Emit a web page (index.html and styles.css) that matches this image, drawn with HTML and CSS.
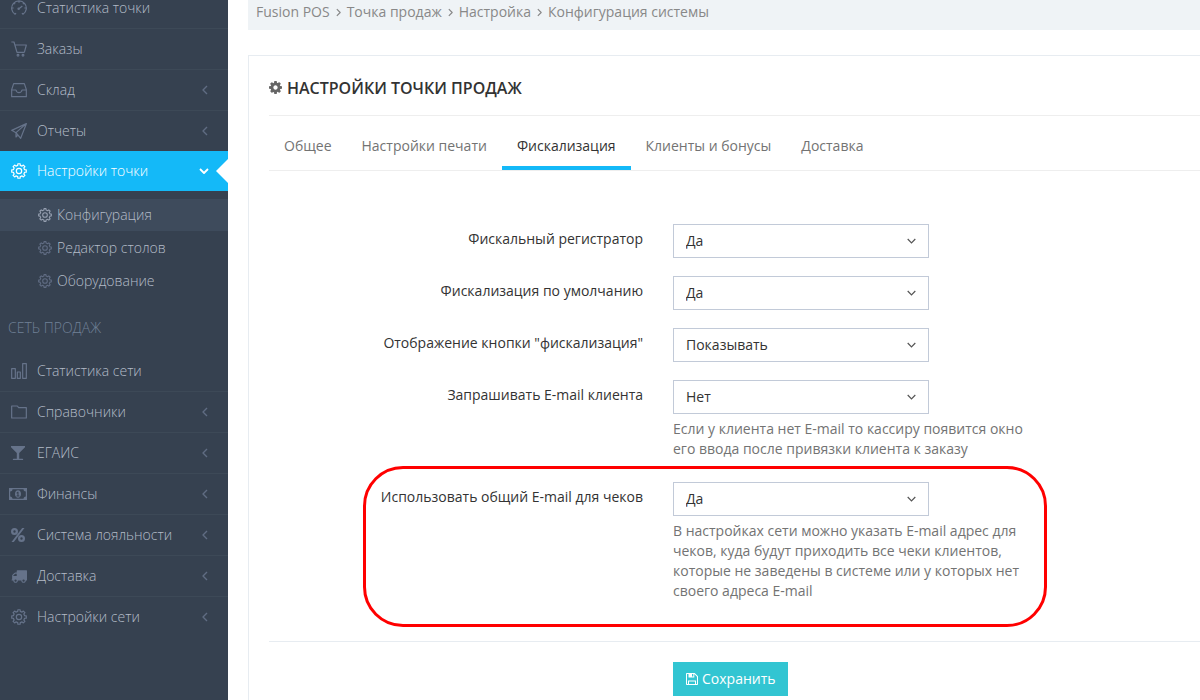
FILE: index.html
```
<!DOCTYPE html>
<html lang="ru">
  <head>
    <meta charset="UTF-8" />
    <meta name="viewport" content="width=device-width, initial-scale=1.0" />
    <title>Fusion POS - Конфигурация системы</title>
    <link rel="stylesheet" href="styles.css">
  </head>
  <body>
    <!-- Иконки -->
    <svg class="sprite" aria-hidden="true">
      <symbol id="i-gear" viewBox="0 0 24 24">
        <path class="line" d="M10.3 1.1H13.7L13.9 3.6L16.6 4.7L18.5 3.1L20.9 5.5L19.3 7.4L20.4 10.1L22.9 10.3V13.7L20.4 13.9L19.3 16.6L20.9 18.5L18.5 20.9L16.6 19.3L13.9 20.4L13.7 22.9H10.3L10.1 20.4L7.4 19.3L5.5 20.9L3.1 18.5L4.7 16.6L3.6 13.9L1.1 13.7V10.3L3.6 10.1L4.7 7.4L3.1 5.5L5.5 3.1L7.4 4.7L10.1 3.6Z" />
        <circle class="line" cx="12" cy="12" r="4" />
      </symbol>
      <symbol id="i-speed" viewBox="0 0 24 24">
        <path class="line" d="M6 21.5A11 11 0 1 1 18 21.5M12 13l5-4M12 1v3M1 12h3M20 12h3M4.2 4.2l2 2M19.8 4.2l-2 2M6 21.5l1.5-2M18 21.5l-1.5-2" />
        <circle class="line" cx="11.5" cy="13" r="1" />
      </symbol>
      <symbol id="i-cart" viewBox="0 0 24 24">
        <path class="line" d="M.5 1.5h4L9 17h11M5.500 6H23l-3 11" />
        <circle class="line" cx="10.5" cy="21.5" r="1.3" />
        <circle class="line" cx="18" cy="21.5" r="1.3" />
      </symbol>
      <symbol id="i-drawer" viewBox="0 0 24 24">
        <path class="line" d="M4 2.500h16l3 9V22H1V11.500zM1 12h6.500c.5 2.500 2 4 4.500 4s4-1.500 4.500-4H23" />
      </symbol>
      <symbol id="i-plane" viewBox="0 0 24 24">
        <path class="line" d="M23 1L1 11l6.500 3.500L14.500 23zM23 1L7.500 14.500V21l3.300-3.300" />
      </symbol>
      <symbol id="i-chart" viewBox="0 0 24 24">
        <path class="line" d="M1 8.500h5.500V23H1zM9.500 13.500H14V23H9.500zM17.500 1H23v22h-5.500z" />
      </symbol>
      <symbol id="i-folder" viewBox="0 0 24 24">
        <path class="line" d="M1 3h8.500l2 2.500H23V21H1z" />
      </symbol>
      <symbol id="i-glass" viewBox="1 1 14 14">
        <path d="M1 1h14c.5.300.400.800 0 1.200L9.200 8v5.800h3.300c.9 0 .9 1.200 0 1.200h-9c-.9 0-.9-1.200 0-1.200h3.300V8L1 2.200C.6 1.800.5 1.300 1 1z" />
      </symbol>
      <symbol id="i-money" viewBox="0 0 18 12">
        <path fill-rule="evenodd" d="M0 0h18v12H0zM3.500 1.200c0 1.300-1 2.300-2.300 2.300v5c1.300 0 2.300 1 2.300 2.300h11c0-1.300 1-2.300 2.300-2.300v-5c-1.300 0-2.300-1-2.300-2.300zM9 2.300c1.900 0 3 1.700 3 3.700s-1.100 3.700-3 3.700S6 8 6 6s1.100-3.700 3-3.700zm-.4 1.500L7.300 4.900l.5.700.6-.4v2.300h-.9v.9h2.900v-.9h-.9V3.800z" />
      </symbol>
      <symbol id="i-percent" viewBox="1 1 14 14">
        <path fill-rule="evenodd" d="M4.500 1a3.500 3.500 0 1 1 0 7 3.500 3.500 0 0 1 0-7zm0 2.300a1.200 1.200 0 1 0 0 2.400 1.200 1.200 0 0 0 0-2.400zM11.500 8a3.500 3.500 0 1 1 0 7 3.500 3.500 0 0 1 0-7zm0 2.300a1.200 1.200 0 1 0 0 2.400 1.200 1.200 0 0 0 0-2.400zM12.200 1h2.300L3.800 15H1.500z" />
      </symbol>
      <symbol id="i-truck" viewBox="0 128 1792 1536">
        <path d="M640 1408q0-52-38-90t-90-38-90 38-38 90 38 90 90 38 90-38 38-90zm-384-512h384v-256h-158q-13 0-22 9l-195 195q-9 9-9 22v30zm1280 512q0-52-38-90t-90-38-90 38-38 90 38 90 90 38 90-38 38-90zm256-1088v1024q0 15-4 26.500t-13.500 18.500-16.500 11.500-23.500 6-22.500 2-25.500 0-22.500-.5q0 106-75 181t-181 75-181-75-75-181h-384q0 106-75 181t-181 75-181-75-75-181h-64q-3 0-22.500.5t-25.500 0-22.500-2-23.500-6-16.500-11.500-13.500-18.500-4-26.500q0-26 19-45t45-19v-320q0-8-.5-35t0-38 2.500-34.500 6.500-37 14-30.500 22.500-30l198-198q19-19 50.500-32t58.500-13h160v-192q0-26 19-45t45-19h1024q26 0 45 19t19 45z" />
      </symbol>
      <symbol id="i-cog" viewBox="128 128 1536 1536">
        <path d="M1152 896q0-106-75-181t-181-75-181 75-75 181 75 181 181 75 181-75 75-181zm512-109v222q0 12-8 23t-20 13l-185 28q-19 54-39 91 35 50 107 138 10 12 10 25t-9 23q-27 37-99 108t-94 71q-12 0-26-9l-138-108q-44 23-91 38-16 136-29 186-7 28-36 28h-222q-14 0-24.500-8.500t-11.500-21.500l-28-184q-49-16-90-37l-141 107q-10 9-25 9-14 0-25-11-126-114-165-168-7-10-7-23 0-12 8-23 15-21 51-66.500t54-70.500q-27-50-41-99l-183-27q-13-2-21-12.500t-8-23.500v-222q0-12 8-23t19-13l186-28q14-46 39-92-40-57-107-138-10-12-10-24 0-10 9-23 26-36 98.500-107.500t94.500-71.500q13 0 26 10l138 107q44-23 91-38 16-136 29-186 7-28 36-28h222q14 0 24.500 8.500t11.500 21.500l28 184q49 16 90 37l142-107q9-9 24-9 13 0 25 10 129 119 165 170 7 8 7 22 0 12-8 23-15 21-51 66.500t-54 70.500q26 50 41 98l183 28q13 2 21 12.500t8 23.500z" />
      </symbol>
      <symbol id="i-save" viewBox="0 0 12 12">
        <path fill-rule="evenodd" d="M0 .8Q0 0 .8 0H8.700l3.300 3.300v7.900q0 .8-.8.800H.8Q0 12 0 11.200zM1 1v10h1V7.500h8V11h1V3.800L8.300 1v3.500H2.500V1zM6 1v2.500h1.300V1zM3 8.500V11h6V8.500z" />
      </symbol>
      <symbol id="i-left" viewBox="0 0 6 10">
        <path class="line thin" d="M5 1L1 5l4 4" />
      </symbol>
      <symbol id="i-right" viewBox="0 0 6 10">
        <path class="line thin" d="M1 1l4 4-4 4" />
      </symbol>
      <symbol id="i-down" viewBox="0 0 10 6">
        <path class="line" d="M1 1l4 4 4-4" />
      </symbol>
    </svg>

    <div class="page">
      <!-- Боковое меню -->
      <nav class="sidebar">
        <ul class="menu">
          <li><a class="menu-link" href="#"><svg class="icon"><use href="#i-speed" /></svg><span class="title">Статистика точки</span></a></li>
          <li><a class="menu-link" href="#"><svg class="icon"><use href="#i-cart" /></svg><span class="title">Заказы</span></a></li>
          <li><a class="menu-link" href="#"><svg class="icon"><use href="#i-drawer" /></svg><span class="title">Склад</span><svg class="arrow"><use href="#i-left" /></svg></a></li>
          <li><a class="menu-link" href="#"><svg class="icon"><use href="#i-plane" /></svg><span class="title">Отчеты</span><svg class="arrow"><use href="#i-left" /></svg></a></li>
          <li>
            <a class="menu-link active" href="#"><svg class="icon"><use href="#i-gear" /></svg><span class="title">Настройки точки</span><svg class="arrow"><use href="#i-down" /></svg></a>
            <ul class="sub-menu">
              <li><a class="sub-link active" href="#"><svg class="icon"><use href="#i-gear" /></svg>Конфигурация</a></li>
              <li><a class="sub-link" href="#"><svg class="icon"><use href="#i-gear" /></svg>Редактор столов</a></li>
              <li><a class="sub-link" href="#"><svg class="icon"><use href="#i-gear" /></svg>Оборудование</a></li>
            </ul>
          </li>
        </ul>
        <h3 class="menu-heading">СЕТЬ ПРОДАЖ</h3>
        <ul class="menu network">
          <li><a class="menu-link" href="#"><svg class="icon"><use href="#i-chart" /></svg><span class="title">Статистика сети</span></a></li>
          <li><a class="menu-link" href="#"><svg class="icon"><use href="#i-folder" /></svg><span class="title">Справочники</span><svg class="arrow"><use href="#i-left" /></svg></a></li>
          <li><a class="menu-link" href="#"><svg class="icon solid"><use href="#i-glass" /></svg><span class="title">ЕГАИС</span><svg class="arrow"><use href="#i-left" /></svg></a></li>
          <li><a class="menu-link" href="#"><svg class="icon wide"><use href="#i-money" /></svg><span class="title">Финансы</span><svg class="arrow"><use href="#i-left" /></svg></a></li>
          <li><a class="menu-link" href="#"><svg class="icon solid"><use href="#i-percent" /></svg><span class="title">Система лояльности</span><svg class="arrow"><use href="#i-left" /></svg></a></li>
          <li><a class="menu-link" href="#"><svg class="icon"><use href="#i-truck" /></svg><span class="title">Доставка</span><svg class="arrow"><use href="#i-left" /></svg></a></li>
          <li><a class="menu-link" href="#"><svg class="icon"><use href="#i-gear" /></svg><span class="title">Настройки сети</span><svg class="arrow"><use href="#i-left" /></svg></a></li>
        </ul>
      </nav>

      <main class="content">
        <div class="breadcrumb">
          <a href="#">Fusion POS</a>
          <svg class="sep"><use href="#i-right" /></svg>
          <a href="#">Точка продаж</a>
          <svg class="sep"><use href="#i-right" /></svg>
          <a href="#">Настройка</a>
          <svg class="sep"><use href="#i-right" /></svg>
          <span>Конфигурация системы</span>
        </div>

        <section class="portlet">
          <header class="portlet-title">
            <svg class="cog"><use href="#i-cog" /></svg>
            <h1>НАСТРОЙКИ ТОЧКИ ПРОДАЖ</h1>
          </header>

          <nav class="tabs">
            <a class="tab" href="#">Общее</a>
            <a class="tab" href="#">Настройки печати</a>
            <a class="tab active" href="#">Фискализация</a>
            <a class="tab" href="#">Клиенты и бонусы</a>
            <a class="tab" href="#">Доставка</a>
          </nav>

          <form>
            <div class="form-body">
              <div class="form-group">
                <label for="registrar">Фискальный регистратор</label>
                <div class="control">
                  <select id="registrar"><option>Да</option><option>Нет</option></select>
                </div>
              </div>
              <div class="form-group">
                <label for="byDefault">Фискализация по умолчанию</label>
                <div class="control">
                  <select id="byDefault"><option>Да</option><option>Нет</option></select>
                </div>
              </div>
              <div class="form-group">
                <label for="showButton">Отображение кнопки "фискализация"</label>
                <div class="control">
                  <select id="showButton"><option>Показывать</option><option>Скрывать</option></select>
                </div>
              </div>
              <div class="form-group">
                <label for="askEmail">Запрашивать E-mail клиента</label>
                <div class="control">
                  <select id="askEmail"><option>Нет</option><option>Да</option></select>
                  <p class="help">Если у клиента нет E-mail то кассиру появится окно его ввода после привязки клиента к заказу</p>
                </div>
              </div>
              <div class="form-group highlight">
                <label for="commonEmail">Использовать общий E-mail для чеков</label>
                <div class="control">
                  <select id="commonEmail"><option>Да</option><option>Нет</option></select>
                  <p class="help">В настройках сети можно указать E-mail адрес для чеков, куда будут приходить все чеки клиентов, которые не заведены в системе или у которых нет своего адреса E-mail</p>
                </div>
              </div>
            </div>
            <div class="form-actions">
              <button class="save" type="submit"><svg><use href="#i-save" /></svg>Сохранить</button>
            </div>
          </form>
        </section>
      </main>
    </div>
  </body>
</html>
```
FILE: styles.css
```
*,
*::after {
  box-sizing: border-box;
}

body {
  margin: 0;
  font-family: "Open Sans", "Noto Sans", sans-serif;
  font-size: 14px;
  line-height: 20px;
  color: #333;
  background-color: #fff;
}

a {
  color: inherit;
  text-decoration: none;
}

ul {
  list-style: none;
  margin: 0;
  padding: 0;
}

svg {
  display: block;
  flex: none;
  fill: currentColor;
}

.sprite {
  display: none;
}

.line {
  fill: none;
  stroke: currentColor;
  stroke-width: 1.8;
  stroke-linejoin: round;
}

.line.thin {
  stroke-width: 1.4;
}

.page {
  display: flex;
  height: 100vh;
  overflow: hidden;
}

/* sidebar */
.sidebar {
  flex: 0 0 228px;
  margin-top: -13px;
  background-color: #364150;
  color: #b4bcc8;
  font-weight: 300;
}

.menu-link {
  display: flex;
  align-items: center;
  height: 41px;
  padding: 0 20px 0 11px;
  border-top: 1px solid #3d4957;
}

.network li:first-child .menu-link {
  border-top-color: transparent;
}

.menu-link .icon {
  width: 16px;
  height: 16px;
  margin-right: 10px;
  color: #66738a;
}

.menu-link .icon.solid {
  width: 14px;
  height: 14px;
  margin-right: 12px;
}

.menu-link .icon.wide {
  width: 18px;
  height: 12px;
  margin-left: -2px;
}

.title {
  flex: 1;
  line-height: 16px;
}

.arrow {
  width: 6px;
  height: 10px;
  color: #606c83;
}

.menu-link.active {
  position: relative;
  height: 40px;
  border-top: none;
  background-color: #14b9f8;
  color: #fff;
  padding-right: 19px;
}

.menu-link.active .icon,
.menu-link.active .arrow {
  color: #fff;
}

.menu-link.active .arrow {
  width: 10px;
  height: 6px;
}

.menu-link.active::after {
  content: "";
  position: absolute;
  top: 8px;
  right: 0;
  border: 12px solid transparent;
  border-left: none;
  border-right-color: #fff;
}

.sub-menu {
  padding: 8px 0;
}

.sub-link {
  display: flex;
  align-items: center;
  gap: 5px;
  height: 32px;
  margin-bottom: 1px;
  padding-left: 38px;
}

.sub-link .icon {
  width: 14px;
  height: 14px;
  color: #606c83;
}

.sub-link.active {
  background-color: #3e4b5c;
}

.sub-link.active .icon {
  color: #959fb0;
}

.menu-heading {
  margin: 0;
  padding-left: 8px;
  font-size: 14px;
  font-weight: 300;
  line-height: 44px;
  color: #708096;
}

/* content */
.content {
  flex: 1;
  min-width: 0;
  padding-left: 20px;
}

.breadcrumb {
  display: flex;
  align-items: center;
  gap: 6px;
  padding: 2px 8px 8px;
  background-color: #eff3f6;
  color: #888;
}

.sep {
  width: 5px;
  height: 9px;
  margin-top: 1px;
}

.portlet {
  margin-top: 25px;
  padding: 12px 0 20px 20px;
  border: 1px solid #e7ecf1;
  border-right: none;
}

.portlet-title {
  display: flex;
  align-items: center;
  gap: 5px;
  height: 48px;
  padding-bottom: 8px;
  border-bottom: 1px solid #eee;
}

.portlet-title h1 {
  margin: 0;
  font-size: 16px;
  font-weight: 600;
}

.cog {
  width: 13px;
  height: 13px;
  color: #666;
}

.tabs {
  display: flex;
  height: 55px;
  border-bottom: 1px solid #eee;
  color: #737373;
}

.tab {
  padding: 20px 15px 10px;
}

.tab.active {
  border-bottom: 4px solid #14b9f8;
  color: #333;
}

/* form */
.form-body {
  display: grid;
  gap: 18px;
  padding: 53px 0 35px;
}

.form-group {
  display: grid;
  grid-template-columns: 374px minmax(0, 360px);
  column-gap: 30px;
}

.form-group label {
  padding-top: 5px;
  text-align: right;
}

select {
  display: block;
  width: 256px;
  height: 34px;
  padding: 0 12px;
  border: 1px solid #c2cad8;
  border-radius: 0;
  appearance: none;
  font: inherit;
  color: #333;
  background: #fff url("data:image/svg+xml,%3Csvg xmlns='http://www.w3.org/2000/svg' width='9' height='6'%3E%3Cpath d='M.7 1l3.800 3.800L8.300 1' fill='none' stroke='%23555' stroke-width='1.200'/%3E%3C/svg%3E") no-repeat right 12px center;
}

.help {
  margin: 5px 0;
  color: #737373;
}

.highlight {
  position: relative;
}

.highlight::after {
  content: "";
  position: absolute;
  top: -16px;
  bottom: -21px;
  left: 94px;
  width: 684px;
  border: 3px solid #f00;
  border-radius: 40px;
  pointer-events: none;
}

.form-actions {
  padding: 20px 0 0 404px;
  border-top: 1px solid #e7ecf1;
}

.save {
  display: flex;
  align-items: center;
  gap: 4px;
  height: 34px;
  padding: 0 12px 0 13px;
  border: none;
  background-color: #32c5d2;
  color: #fff;
  font: inherit;
  cursor: pointer;
}

.save svg {
  width: 12px;
  height: 12px;
}
```
